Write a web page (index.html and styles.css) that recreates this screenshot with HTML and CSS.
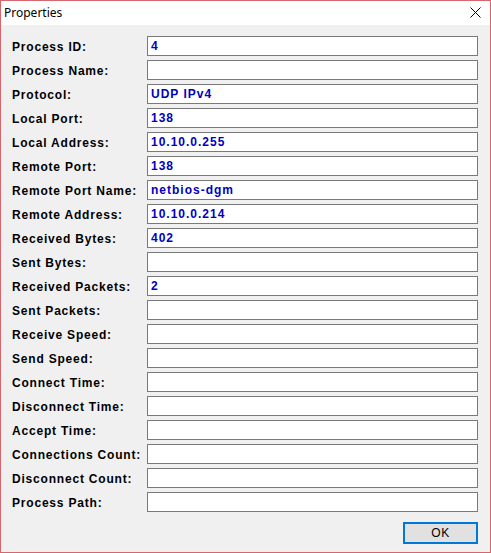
FILE: index.html
```html
<!DOCTYPE html>
<html lang="en">
<head>
    <meta charset="UTF-8">
    <title>Properties</title>
    <link rel="stylesheet" href="styles.css">
</head>
<body>
    <div class="window">
        <div class="titlebar">
            <span class="title">Properties</span>
            <svg class="close" viewBox="0 0 11 11" width="11" height="11">
                <path d="M0.5,0.5 L10.5,10.5 M10.5,0.5 L0.5,10.5" stroke="#000" stroke-width="1" fill="none" />
            </svg>
        </div>

        <div class="content">
            <div class="rows">
                <div class="row"><span class="label">Process ID:</span><div class="field">4</div></div>
                <div class="row"><span class="label">Process Name:</span><div class="field"></div></div>
                <div class="row"><span class="label">Protocol:</span><div class="field">UDP IPv4</div></div>
                <div class="row"><span class="label">Local Port:</span><div class="field">138</div></div>
                <div class="row"><span class="label">Local Address:</span><div class="field">10.10.0.255</div></div>
                <div class="row"><span class="label">Remote Port:</span><div class="field">138</div></div>
                <div class="row"><span class="label">Remote Port Name:</span><div class="field">netbios-dgm</div></div>
                <div class="row"><span class="label">Remote Address:</span><div class="field">10.10.0.214</div></div>
                <div class="row"><span class="label">Received Bytes:</span><div class="field">402</div></div>
                <div class="row"><span class="label">Sent Bytes:</span><div class="field"></div></div>
                <div class="row"><span class="label">Received Packets:</span><div class="field">2</div></div>
                <div class="row"><span class="label">Sent Packets:</span><div class="field"></div></div>
                <div class="row"><span class="label">Receive Speed:</span><div class="field"></div></div>
                <div class="row"><span class="label">Send Speed:</span><div class="field"></div></div>
                <div class="row"><span class="label">Connect Time:</span><div class="field"></div></div>
                <div class="row"><span class="label">Disconnect Time:</span><div class="field"></div></div>
                <div class="row"><span class="label">Accept Time:</span><div class="field"></div></div>
                <div class="row"><span class="label">Connections Count:</span><div class="field"></div></div>
                <div class="row"><span class="label">Disconnect Count:</span><div class="field"></div></div>
                <div class="row"><span class="label">Process Path:</span><div class="field"></div></div>
            </div>

            <div class="buttons">
                <button class="ok">OK</button>
            </div>
        </div>
    </div>
</body>
</html>
```

FILE: styles.css
```css
body {
    margin: 0;
    padding: 0;
    background-color: #f0f0f0;
}

.window {
    width: 491px;
    height: 553px;
    box-sizing: border-box;
    border: 1px solid #d5666e;
    background-color: #f0f0f0;
    display: flex;
    flex-direction: column;
}

.titlebar {
    height: 25px;
    background-color: white;
    display: flex;
    align-items: center;
    justify-content: space-between;
    padding: 0 9px 0 3px;
}

.title {
    font-family: 'Noto Sans', 'Open Sans', sans-serif;
    font-size: 12px;
    color: #000;
    position: relative;
    top: -1px;
}

.close {
    display: block;
    position: relative;
    top: -1px;
}

.content {
    flex: 1;
    padding: 11px 12px 8px 11px;
    display: flex;
    flex-direction: column;
}

.rows {
    display: flex;
    flex-direction: column;
    gap: 4px;
}

.row {
    display: flex;
    align-items: center;
    height: 20px;
}

.label {
    width: 135px;
    flex: none;
    font-family: 'Liberation Sans', Arial, sans-serif;
    font-weight: bold;
    font-size: 12px;
    letter-spacing: 0.8px;
    line-height: 20px;
    padding-top: 1px;
    color: #000;
    white-space: nowrap;
}

.field {
    flex: 1;
    height: 20px;
    box-sizing: border-box;
    border: 1px solid #7a7a7a;
    background-color: white;
    padding: 1px 3px 0;
    font-family: 'Liberation Sans', Arial, sans-serif;
    font-weight: bold;
    font-size: 12px;
    letter-spacing: 1px;
    line-height: 17px;
    color: #0000c0;
}

.buttons {
    margin-top: 10px;
    display: flex;
    justify-content: flex-end;
}

.ok {
    width: 75px;
    height: 22px;
    box-sizing: border-box;
    border: 2px solid #0078d7;
    background-color: #e1e1e1;
    font-family: 'Liberation Sans', Arial, sans-serif;
    font-size: 12px;
    letter-spacing: 0.6px;
    color: #000;
    padding: 0;
}
```
